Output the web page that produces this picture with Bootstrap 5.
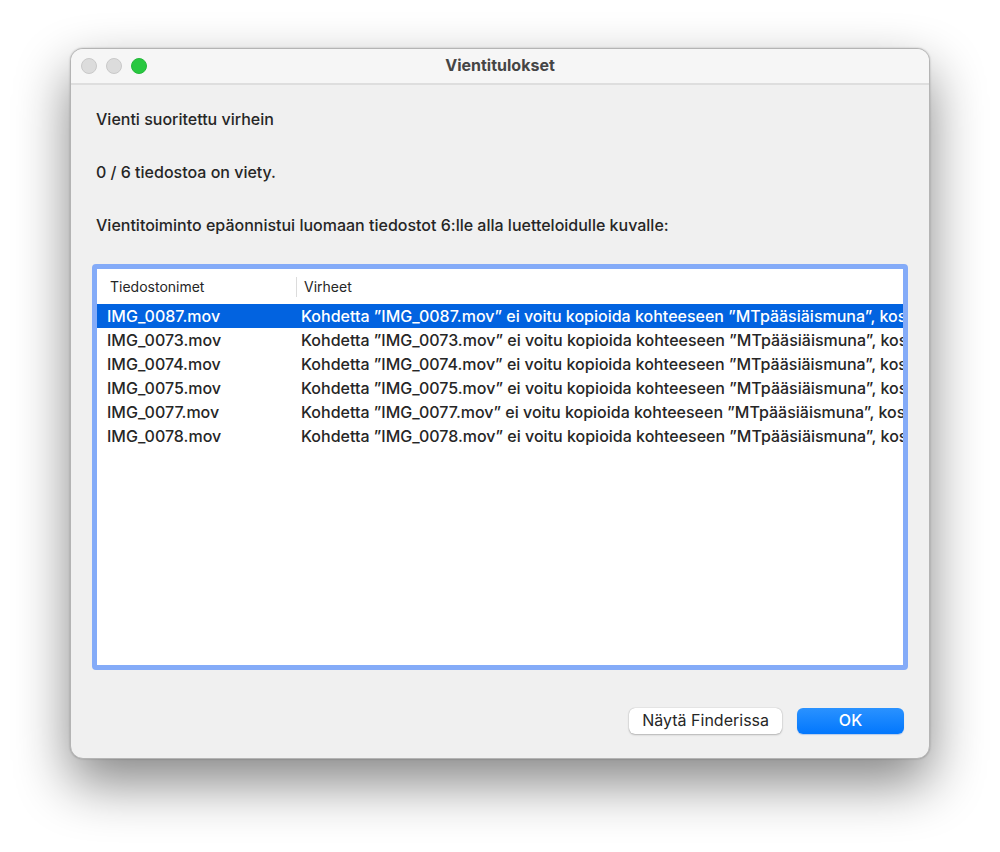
<!DOCTYPE html>
<html lang="fi">
<head>
<meta charset="utf-8">
<meta name="viewport" content="width=device-width, initial-scale=1">
<title>Vientitulokset</title>
<link href="https://cdn.jsdelivr.net/npm/bootstrap@5.3.0/dist/css/bootstrap.min.css" rel="stylesheet">
<style>
  body { font-family: Inter, "Liberation Sans", sans-serif; font-size: 16px; line-height: 24px; color: #262626; background: #fff; }
  .desktop { padding: 48px 70px 93px; overflow: hidden; }
  .dialog-window { background: #f0f0f0; border: 1px solid #b4b4b4; border-radius: 13px; box-shadow: 0 24px 54px rgba(0,0,0,.48), 0 0 2px rgba(0,0,0,.25); }
  .title-bar { display: grid; grid-template-columns: 1fr auto 1fr; height: 36px; padding: 0 10px; background: #f6f6f6; border-bottom: 2px solid #dedede; border-radius: 12px 12px 0 0; }
  .title-bar h1 { padding-bottom: 2px; font-size: 16px; line-height: 24px; font-weight: 700; color: #454545; }
  .light { width: 16px; height: 16px; padding: 0; border: 1px solid #c9c9c9; border-radius: 50%; background: #dcdcdc; }
  .light-zoom { background: #28c840; border-color: #24b83a; }
  .window-body { padding: 22px 21px 24px; }
  .messages { gap: 29px; padding: 0 4px; margin-bottom: 27px; font-weight: 500; }
  .results { background: #fff; border: 5px solid #84abf8; border-radius: 4px; overflow: hidden; }
  .results table { table-layout: fixed; }
  .results th { height: 35px; padding: 0; font-size: 14px; line-height: 20px; font-weight: 400; }
  .results th span { display: block; padding: 0 13px; }
  .results th + th span { padding: 0 7px; border-left: 1px solid #dcdcdc; }
  .results td { height: 24px; padding: 0 10px; font-weight: 500; white-space: nowrap; overflow: hidden; }
  .results td + td { padding: 0 0 0 5px; }
  .results .selected td { background: #0263e0; color: #fff; }
  .name-col { width: 199px; }
  .actions { gap: 15px; padding: 0 4px; margin-top: 38px; }
  .mac-btn { min-width: 107px; height: 26px; padding: 0 13px 2px; border: 0; border-radius: 6px; font-size: 16px; line-height: 24px; color: #262626; background: #fff; box-shadow: 0 0 1px rgba(0,0,0,.35), 0 1px 2px rgba(0,0,0,.22); }
  .mac-btn.default { color: #fff; font-weight: 500; background: linear-gradient(#2a92ff, #0277fd); box-shadow: 0 1px 1px rgba(0,90,220,.25); }
</style>
</head>
<body>
<main class="desktop d-flex flex-column min-vh-100">
  <section class="dialog-window d-flex flex-column flex-grow-1" aria-labelledby="title">
    <header class="title-bar align-items-center">
      <div class="d-flex" style="gap:9px">
        <button class="light" type="button" aria-label="Sulje" disabled></button>
        <button class="light" type="button" aria-label="Pienennä" disabled></button>
        <button class="light light-zoom" type="button" aria-label="Suurenna"></button>
      </div>
      <h1 class="m-0" id="title">Vientitulokset</h1>
    </header>
    <div class="window-body d-flex flex-column flex-grow-1">
      <div class="messages d-flex flex-column">
        <p class="m-0">Vienti suoritettu virhein</p>
        <p class="m-0">0 / 6 tiedostoa on viety.</p>
        <p class="m-0">Vientitoiminto epäonnistui luomaan tiedostot 6:lle alla luetteloidulle kuvalle:</p>
      </div>
      <div class="results flex-grow-1">
        <table class="w-100">
          <colgroup><col class="name-col"><col></colgroup>
          <thead><tr><th scope="col"><span>Tiedostonimet</span></th><th scope="col"><span>Virheet</span></th></tr></thead>
          <tbody>
            <tr class="selected"><td>IMG_0087.mov</td><td>Kohdetta ”IMG_0087.mov” ei voitu kopioida kohteeseen ”MTpääsiäismuna”, kos</td></tr>
            <tr><td>IMG_0073.mov</td><td>Kohdetta ”IMG_0073.mov” ei voitu kopioida kohteeseen ”MTpääsiäismuna”, kos</td></tr>
            <tr><td>IMG_0074.mov</td><td>Kohdetta ”IMG_0074.mov” ei voitu kopioida kohteeseen ”MTpääsiäismuna”, kos</td></tr>
            <tr><td>IMG_0075.mov</td><td>Kohdetta ”IMG_0075.mov” ei voitu kopioida kohteeseen ”MTpääsiäismuna”, kos</td></tr>
            <tr><td>IMG_0077.mov</td><td>Kohdetta ”IMG_0077.mov” ei voitu kopioida kohteeseen ”MTpääsiäismuna”, kos</td></tr>
            <tr><td>IMG_0078.mov</td><td>Kohdetta ”IMG_0078.mov” ei voitu kopioida kohteeseen ”MTpääsiäismuna”, kos</td></tr>
          </tbody>
        </table>
      </div>
      <div class="actions d-flex justify-content-end">
        <button class="mac-btn" type="button">Näytä Finderissa</button>
        <button class="mac-btn default" type="button">OK</button>
      </div>
    </div>
  </section>
</main>
<script src="https://cdn.jsdelivr.net/npm/bootstrap@5.3.0/dist/js/bootstrap.bundle.min.js"></script>
</body>
</html>
